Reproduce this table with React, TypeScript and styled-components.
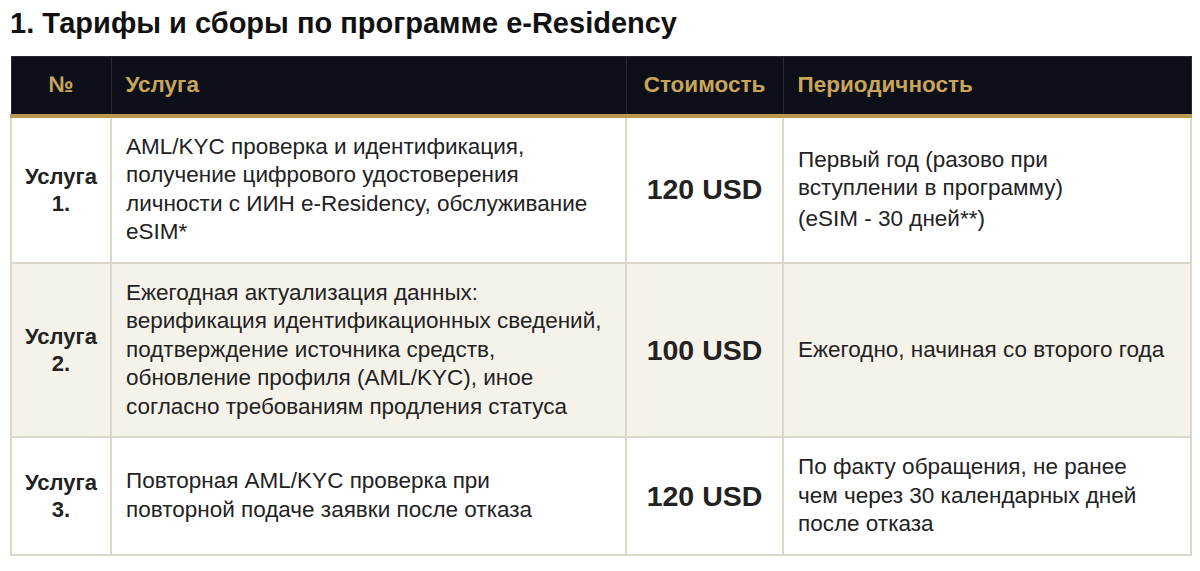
import styled, { createGlobalStyle } from "styled-components";

const GlobalStyle = createGlobalStyle`
  html, body {
    margin: 0;
    padding: 0;
    background: #ffffff;
  }
  body {
    font-family: "Liberation Sans", Arial, sans-serif;
    color: #1c1c1c;
  }
`;

const Page = styled.div`
  padding: 0 10px 0 10px;
`;

const Title = styled.h1`
  margin: 0 0 14px 0;
  padding-top: 4px;
  font-size: 29px;
  line-height: 38px;
  font-weight: 700;
  color: #111111;
`;

const Table = styled.table`
  width: 1180px;
  border-collapse: collapse;
  table-layout: fixed;
`;

const HeadCell = styled.th<{ $align?: string; $w: number }>`
  width: ${(p) => p.$w}px;
  height: 59px;
  box-sizing: border-box;
  background: #0c0f17;
  color: #c9a55b;
  font-size: 22.5px;
  font-weight: 700;
  text-align: ${(p) => p.$align ?? "left"};
  padding: 0 14px;
  border: 1px solid #272a33;
  border-bottom: 4px solid #b8974e;
`;

const Row = styled.tr<{ $shade?: boolean }>`
  background: ${(p) => (p.$shade ? "#f5f2ea" : "#ffffff")};
`;

const Cell = styled.td`
  border: 2px solid #ddd7ca;
  padding: 15px 14px;
  font-size: 22.5px;
  line-height: 28.5px;
  color: #222222;
  vertical-align: middle;
  white-space: pre-line;
`;

const NumCell = styled(Cell)`
  text-align: center;
  font-weight: 700;
  font-size: 22px;
  line-height: 27px;
  padding: 15px 4px;
`;

const PriceCell = styled(Cell)`
  text-align: center;
  font-weight: 700;
  font-size: 28.5px;
  padding: 15px 4px;
`;

const Note = styled.span`
  display: block;
  margin-top: 2px;
`;

const rows = [
  {
    n: "1.",
    service:
      "AML/KYC проверка и идентификация, получение цифрового удостоверения личности с ИИН e-Residency, обслуживание eSIM*",
    price: "120 USD",
    period: (
      <>
        {"Первый год (разово при\nвступлении в программу)"}
        <Note>(eSIM - 30 дней**)</Note>
      </>
    ),
  },
  {
    n: "2.",
    service:
      "Ежегодная актуализация данных: верификация идентификационных сведений, подтверждение источника средств, обновление профиля (AML/KYC), иное согласно требованиям продления статуса",
    price: "100 USD",
    period: "Ежегодно, начиная со второго года",
  },
  {
    n: "3.",
    service: "Повторная AML/KYC проверка при\nповторной подаче заявки после отказа",
    price: "120 USD",
    period: "По факту обращения, не ранее\nчем через 30 календарных дней\nпосле отказа",
  },
];

export default function App() {
  return (
    <Page>
      <GlobalStyle />
      <Title>1. Тарифы и сборы по программе e-Residency</Title>
      <Table>
        <thead>
          <tr>
            <HeadCell $w={100} $align="center">№</HeadCell>
            <HeadCell $w={515}>Услуга</HeadCell>
            <HeadCell $w={157} $align="center">Стоимость</HeadCell>
            <HeadCell $w={408}>Периодичность</HeadCell>
          </tr>
        </thead>
        <tbody>
          {rows.map((r, i) => (
            <Row key={r.n} $shade={i === 1}>
              <NumCell>{`Услуга\n${r.n}`}</NumCell>
              <Cell>{r.service}</Cell>
              <PriceCell>{r.price}</PriceCell>
              <Cell>{r.period}</Cell>
            </Row>
          ))}
        </tbody>
      </Table>
    </Page>
  );
}
